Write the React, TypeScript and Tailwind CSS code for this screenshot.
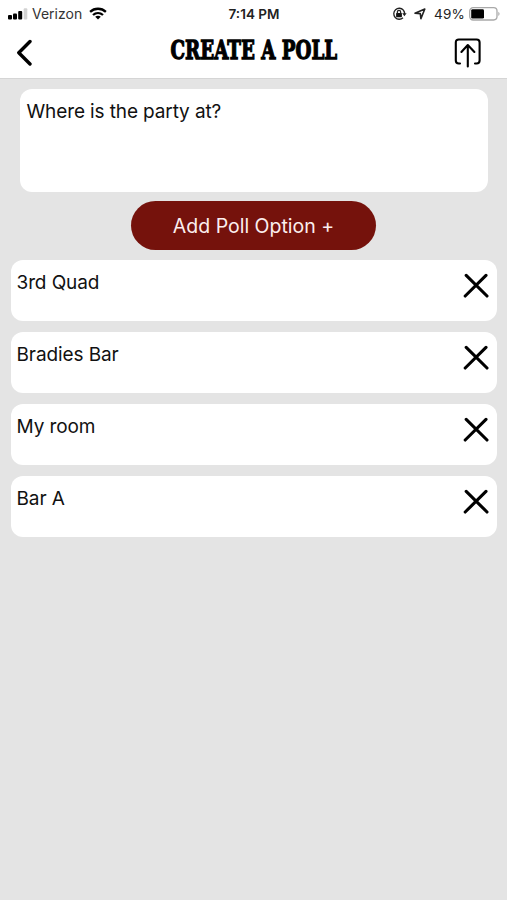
import React from 'react';

const options = ['3rd Quad', 'Bradies Bar', 'My room', 'Bar A'];

const SignalIcon: React.FC = () => (
  <svg width="20" height="12" viewBox="0 0 20 12" className="shrink-0">
    <rect x="0" y="7" width="4" height="4.5" rx="1" />
    <rect x="5" y="5.5" width="4" height="6" rx="1" />
    <rect x="10.2" y="3" width="4" height="8.5" rx="1" />
    <rect x="15.7" y="0.3" width="3.6" height="11.2" rx="1" fill="#d2d2d2" />
  </svg>
);

const WifiIcon: React.FC = () => (
  <svg width="18" height="13" viewBox="0 0 18 13" fill="none" stroke="#000" strokeWidth="2.3">
    <path d="M1.1 4.9C5.6 0.7 12.4 0.7 16.9 4.9" />
    <path d="M4 8C6.9 5.4 11.1 5.4 14 8" />
    <path d="M6.2 9.7C7.8 8.3 10.2 8.3 11.8 9.7L9 12.5Z" fill="#000" stroke="none" />
  </svg>
);

const LockIcon: React.FC = () => (
  <svg width="15" height="14" viewBox="0 0 15 14" fill="none" stroke="#222" strokeWidth="1.3">
    <path d="M11.3 3A5.5 5.5 0 1 0 11 10.8" />
    <path d="M11.3 3A5.5 5.5 0 0 1 12.5 7" />
    <path d="M10.2 6.2H14.6L12.4 9.2Z" fill="#222" stroke="none" />
    <rect x="4.1" y="6" width="5.8" height="4.2" rx="0.6" fill="#111" stroke="none" />
    <path d="M5.4 6.4V4.9A1.6 1.6 0 0 1 8.6 4.9V6.4" />
  </svg>
);

const LocationIcon: React.FC = () => (
  <svg width="12" height="12" viewBox="0 0 12 12" fill="none" stroke="#222" strokeWidth="1.6" strokeLinejoin="round">
    <path d="M1 5.3L10.8 1L6.9 10.6L6.3 5.6Z" />
  </svg>
);

const BatteryIcon: React.FC = () => (
  <svg width="31" height="14" viewBox="0 0 31 14">
    <rect x="0.7" y="0.7" width="27.3" height="12.3" rx="3.4" fill="#fff" stroke="#a9a9a9" strokeWidth="1.3" />
    <rect x="2.2" y="2.2" width="12.8" height="9.4" rx="1.4" />
    <path d="M29.3 4.8C31 5.6 31 8.2 29.3 9Z" fill="#a9a9a9" />
  </svg>
);

const StatusBar: React.FC = () => (
  <div className="grid h-[27px] grid-cols-[1fr_auto_1fr] items-center pl-[8px] pr-[7px] text-[13.5px]">
    <div className="flex items-center">
      <SignalIcon />
      <span className="ml-[4px] mr-[7px] text-[14px] text-[#333]">Verizon</span>
      <WifiIcon />
    </div>
    <span className="pt-px text-[13.5px] font-semibold text-[#222]">7:14 PM</span>
    <div className="flex items-center justify-end">
      <LockIcon />
      <span className="ml-[7px] mr-[8px]"><LocationIcon /></span>
      <span className="mr-[4px] pt-px tracking-[0.2px] text-[#222]">49%</span>
      <BatteryIcon />
    </div>
  </div>
);

const Header: React.FC = () => (
  <header className="h-[79px] border-b border-[#d5d5d5] bg-white">
    <StatusBar />
    <div className="grid h-[51px] grid-cols-[60px_1fr_60px] items-center">
      <button aria-label="Back" className="pl-[16px]">
        <svg width="17" height="27" viewBox="0 0 17 27" fill="none" stroke="#000" strokeWidth="3.4" strokeLinecap="round" strokeLinejoin="round">
          <path d="M14 2.5L2.8 13.8L14 25" />
        </svg>
      </button>
      <h1 className="flex justify-center whitespace-nowrap pb-[5px] font-['DejaVu_Serif','Liberation_Serif',serif] text-[26.5px] leading-[30px] font-bold text-black">
        <span className="scale-x-[0.69] [-webkit-text-stroke:1.3px_#000]">CREATE A POLL</span>
      </h1>
      <button aria-label="Share poll" className="pl-[7px]">
        <svg width="28" height="30" viewBox="0 0 28 30" fill="none" stroke="#000" strokeWidth="2.1" strokeLinecap="round" strokeLinejoin="round">
          <path d="M6 25.5H4.8Q1.8 25.5 1.8 22.5V4.5Q1.8 1.5 4.8 1.5H22.6Q25.6 1.5 25.6 4.5V22.5Q25.6 25.5 22.6 25.5H21" />
          <path d="M13.8 28.5V7.5M7.4 14L13.8 7L20.4 14" />
        </svg>
      </button>
    </div>
  </header>
);

const PollOption: React.FC<{ label: string }> = ({ label }) => (
  <li className="flex h-[61px] items-start justify-between rounded-[12px] bg-white pl-[6px] pr-[8px] pt-[10px]">
    <span className="pt-px leading-[24px] tracking-[-0.1px]">{label}</span>
    <button aria-label={`Remove ${label}`} className="pt-[3px]">
      <svg width="26" height="26" viewBox="0 0 26 26" fill="none" stroke="#000" strokeWidth="3.1" strokeLinecap="round">
        <path d="M3.2 2.4L24 23M23 2.4L2.2 23" />
      </svg>
    </button>
  </li>
);

const App: React.FC = () => {
  return (
    <div className="h-[900px] w-[507px] overflow-hidden bg-[#e4e4e4] font-['Inter','Liberation_Sans',sans-serif] text-[19px] text-[#111]">
      <Header />
      <main className="flex flex-col items-center">
        <div className="mt-[10px] h-[103px] w-[468px] rounded-[12px] bg-white px-[7px] pt-[11px] leading-[24px] tracking-[-0.12px]">
          Where is the party at?
        </div>
        <button className="mt-[9px] h-[49px] w-[245px] rounded-full bg-[#75120c] pt-[2px] text-[19.5px] text-[#fbeeee]">
          Add Poll Option +
        </button>
        <ul className="mt-[10px] flex w-[486px] flex-col gap-[11px]">
          {options.map((option) => (
            <PollOption key={option} label={option} />
          ))}
        </ul>
      </main>
    </div>
  );
};

export default App;
